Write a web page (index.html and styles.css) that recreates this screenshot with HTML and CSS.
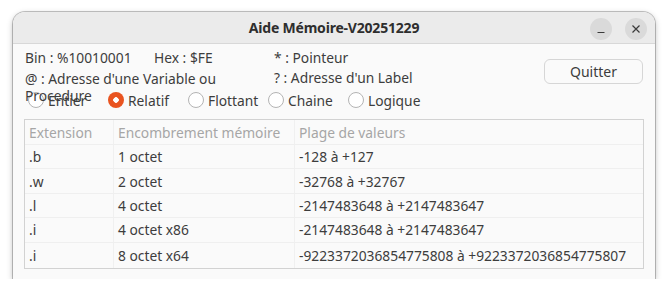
FILE: index.html
```html
<!doctype html>
<html>
<head>
<meta charset="utf-8">
<link rel="stylesheet" href="styles.css">
</head>
<body>
<div class="window">

	<div class="titlebar">
		<div class="title">Aide Mémoire-V20251229</div>
		<div class="tbtns">
			<span class="tbtn"><svg width="10" height="10" viewBox="0 0 10 10"><path d="M1.5 8.5h7" stroke="#3a3a3a" stroke-width="1.2"/></svg></span>
			<span class="tbtn"><svg width="10" height="10" viewBox="0 0 10 10"><path d="M1.5 1.5l7 7M8.5 1.5l-7 7" stroke="#3a3a3a" stroke-width="1.2"/></svg></span>
		</div>
	</div>

	<div class="content">
		<div class="top">
			<div class="info">
				<div class="c1">Bin : %10010001</div>
				<div class="c2">Hex : $FE</div>
				<div class="c3">* : Pointeur</div>
				<div class="c1 wrap">@ : Adresse d'une Variable ou Procedure</div>
				<div class="c2"></div>
				<div class="c3">? : Adresse d'un Label</div>
			</div>
			<button class="quit">Quitter</button>
		</div>

		<div class="radios">
			<label class="radio"><span class="dot"></span>Entier</label>
			<label class="radio"><span class="dot on"></span>Relatif</label>
			<label class="radio"><span class="dot"></span>Flottant</label>
			<label class="radio"><span class="dot"></span>Chaine</label>
			<label class="radio"><span class="dot"></span>Logique</label>
		</div>

		<div class="table">
			<div class="row head">
				<div>Extension</div><div>Encombrement mémoire</div><div>Plage de valeurs</div>
			</div>
			<div class="row">
				<div>.b</div><div>1 octet</div><div>-128 à +127</div>
			</div>
			<div class="row">
				<div>.w</div><div>2 octet</div><div>-32768 à +32767</div>
			</div>
			<div class="row">
				<div>.l</div><div>4 octet</div><div>-2147483648 à +2147483647</div>
			</div>
			<div class="row">
				<div>.i</div><div>4 octet x86</div><div>-2147483648 à +2147483647</div>
			</div>
			<div class="row last">
				<div>.i</div><div>8 octet x64</div><div>-9223372036854775808 à +9223372036854775807</div>
			</div>
		</div>
	</div>

</div>
</body>
</html>
```

FILE: styles.css
```css
*{margin:0; padding:0; box-sizing:border-box;}
body{
	background:#fff;
	font-family:"Noto Sans", "DejaVu Sans", sans-serif;
	font-size:13.8px; color:#3d3d3d;
}
.window{
	width:642px; height:267px;
	margin:12px 0 0 13px;
	background:#fafafa;
	border-radius:12px 12px 0 0;
	box-shadow:0 0 0 1px rgba(0,0,0,.22), 0 2px 6px rgba(0,0,0,.28);
	display:flex; flex-direction:column;
	overflow:hidden;
}
.titlebar{
	height:32px; flex:none;
	background:#ebebeb;
	border-bottom:1px solid #d8d8d8;
	display:flex; align-items:center; justify-content:center;
	position:relative;
}
.title{
	font-weight:bold; font-size:14px; color:#2e2e2e;
	letter-spacing:-0.2px;
}
.tbtns{
	position:absolute; right:8px; top:6px;
	display:flex; gap:13px;
}
.tbtn{
	width:22px; height:22px; border-radius:50%;
	background:#dadada;
	display:flex; align-items:center; justify-content:center;
}
.content{
	padding:4px 11px 0 11px;
	display:flex; flex-direction:column;
}
.top{
	display:flex; justify-content:space-between; align-items:flex-start;
	height:40px;
	position:relative; z-index:1;
}
.info{
	display:grid;
	grid-template-columns:129px 120px 200px;
	grid-auto-rows:20px;
	padding-left:1px;
}
.info div{line-height:20px; white-space:nowrap;}
.info .wrap{
	white-space:normal; width:230px; line-height:17px; padding-top:2px;
}
.quit{
	margin-top:11px; margin-right:1px;
	width:99px; height:25px;
	border:1px solid #d6d6d6; border-radius:6px;
	background:#fafafa;
	font-family:inherit; font-size:14px; color:#3d3d3d;
}
.radios{
	display:flex; height:24px; align-items:center;
	padding-left:4px;
}
.radio{
	width:80px; display:flex; align-items:center; gap:4px;
}
.dot{
	width:16px; height:16px; border-radius:50%;
	border:1px solid #b4b4b4; background:#fff;
	flex:none;
}
.dot.on{
	border:none;
	background:radial-gradient(circle, #fff 0 2.5px, #e95420 3px);
}
.table{
	margin-top:7px;
	border:1px solid #d2d2d2;
	background:#fafafa;
}
.row{
	display:grid;
	grid-template-columns:89px 181px 1fr;
	height:24.4px;
	border-bottom:1px solid #efefef;
}
.row.last{border-bottom:none; height:25px;}
.row div{
	padding-left:4px;
	display:flex; align-items:center;
	border-right:1px solid #f0f0f0;
	white-space:nowrap;
}
.row div:last-child{border-right:none;}
.row.head{height:25px; color:#a6a6a6;}
```
